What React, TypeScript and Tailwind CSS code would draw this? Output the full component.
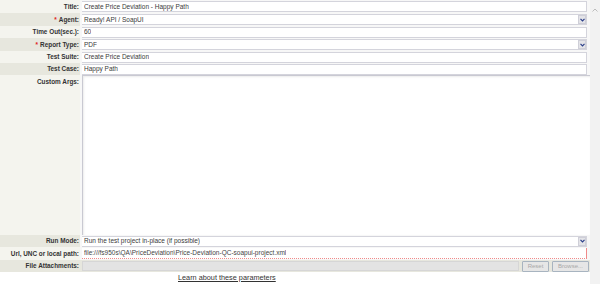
import React from 'react'

type Row = {
  label: string
  required?: boolean
  value?: string
  kind?: 'text' | 'select' | 'area' | 'url' | 'file'
  h: string
  dark?: boolean
}

const rows: Row[] = [
  { label: 'Title:', value: 'Create Price Deviation - Happy Path', h: 'h-[13px]' },
  { label: 'Agent:', required: true, value: 'Ready! API / SoapUI', kind: 'select', h: 'h-[13px]', dark: true },
  { label: 'Time Out(sec.):', value: '60', h: 'h-[12px]' },
  { label: 'Report Type:', required: true, value: 'PDF', kind: 'select', h: 'h-[13px]', dark: true },
  { label: 'Test Suite:', value: 'Create Price Deviation', h: 'h-[12px]' },
  { label: 'Test Case:', value: 'Happy Path', h: 'h-[12px]', dark: true },
  { label: 'Custom Args:', kind: 'area', h: 'h-[160px]' },
  { label: 'Run Mode:', value: 'Run the test project in-place (if possible)', kind: 'select', h: 'h-[12px]', dark: true },
  { label: 'Url, UNC or local path:', value: 'file:///fs950s\\QA\\PriceDeviation\\Price-Deviation-QC-soapui-project.xml', kind: 'url', h: 'h-[13px]' },
  { label: 'File Attachments:', kind: 'file', h: 'h-[12px]', dark: true },
]

function Arrow() {
  return (
    <span className="flex h-[9px] w-[8px] items-center justify-center bg-[#e4e4e8] border border-[#cfcfd8]">
      <svg width="5" height="4" viewBox="0 0 5 4">
        <path d="M0.5 0.8 L2.5 2.8 L4.5 0.8" fill="none" stroke="#2b3f8a" strokeWidth="1.2" />
      </svg>
    </span>
  )
}

function Field({ row }: { row: Row }) {
  if (row.kind === 'area') {
    return <div className="h-full w-full border-l border-t border-[#c9c9d2] bg-white shadow-[inset_1px_1px_2px_rgba(0,0,0,0.08)]" />
  }
  if (row.kind === 'file') {
    return (
      <div className="flex h-full items-center gap-[3px] pr-[1px]">
        <div className="h-[10px] flex-1 border border-[#d6d6d6] bg-[#e3e3e3]" />
        <button className="h-[11px] w-[27px] rounded-[1px] border border-[#a8b4c0] bg-[#e6e6e6] text-[6px] leading-none text-[#a8a8a8]">
          Reset
        </button>
        <button className="h-[11px] w-[37px] rounded-[1px] border border-[#a8b4c0] bg-[#e6e6e6] text-[6px] leading-none text-[#a8a8a8]">
          Browse...
        </button>
      </div>
    )
  }
  const url = row.kind === 'url'
  return (
    <div className="flex h-full items-center">
      <div
        className={
          url
            ? 'flex h-[11px] w-[505px] items-center border-r border-b border-[#f08a8a] [border-bottom-style:dotted] bg-white pl-[2px] text-[6.5px] text-[#444]'
            : 'flex h-[11px] w-[505px] items-center justify-between border-y border-r border-[#d4d4dc] bg-white pl-[2px] text-[6.5px] text-[#3a3a3a]'
        }
      >
        <span className="truncate">{row.value}</span>
        {row.kind === 'select' && <Arrow />}
      </div>
    </div>
  )
}

export default function App() {
  return (
    <div className="flex h-[284px] w-[600px] bg-white font-['Liberation_Sans',Arial,sans-serif]">
      <div className="flex w-[590px] flex-col">
        <div className="grid grid-cols-[80px_1fr]">
          {rows.map((r) => (
            <React.Fragment key={r.label}>
              <div
                className={`${r.h} flex ${r.kind === 'area' ? 'items-start pt-[2px]' : 'items-center'} justify-end pr-[1px] text-[6.4px] font-bold text-[#333] ${r.dark ? 'bg-[#e7e7de]' : 'bg-[#f4f4ee]'}`}
              >
                {r.required && <span className="mr-[2px] text-[#e02020]">*</span>}
                {r.label}
              </div>
              <div className={`${r.h} pl-[2px] ${r.kind === 'file' ? 'bg-[#e7e7de]' : 'bg-[#f7f7f7]'}`}>
                <Field row={r} />
              </div>
            </React.Fragment>
          ))}
        </div>
        <div className="flex h-[12px] items-center pl-[178px]">
          <a href="#" className="text-[7.3px] text-[#333] underline">
            Learn about these parameters
          </a>
        </div>
      </div>
      <div className="flex w-[10px] flex-col items-center bg-[#f2f2f2] pt-[8px]">
        <svg width="6" height="4" viewBox="0 0 6 4">
          <path d="M0.5 3.5 L3 1 L5.5 3.5" fill="none" stroke="#b5b5b5" strokeWidth="0.9" />
        </svg>
      </div>
    </div>
  )
}
